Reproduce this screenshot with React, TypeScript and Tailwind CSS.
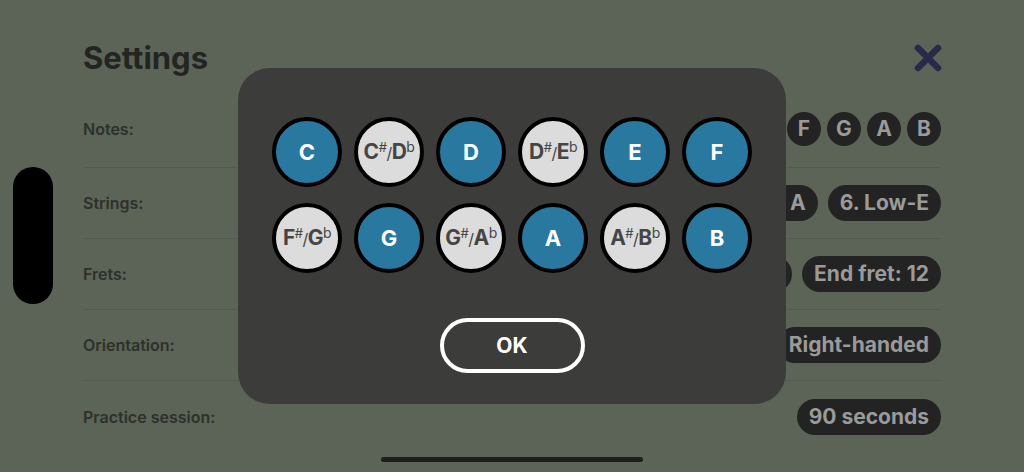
import React from "react";

const NOTES = [
  { name: "C", on: true },
  { name: "C#/Db", on: false },
  { name: "D", on: true },
  { name: "D#/Eb", on: false },
  { name: "E", on: true },
  { name: "F", on: true },
  { name: "F#/Gb", on: false },
  { name: "G", on: true },
  { name: "G#/Ab", on: false },
  { name: "A", on: true },
  { name: "A#/Bb", on: false },
  { name: "B", on: true },
];

const Chip = ({ children }: { children: React.ReactNode }) => (
  <div className="h-[36px] px-[12px] rounded-full bg-[#222322] text-[#9a9a9a] text-[21px] font-bold leading-[36px] whitespace-nowrap">
    {children}
  </div>
);

const NoteLabel = ({ name }: { name: string }) => {
  if (!name.includes("/")) return <span>{name}</span>;
  const [sharp, flat] = name.split("/");
  return (
    <span className="flex items-baseline tracking-[-0.5px]">
      {sharp[0]}
      <span className="text-[13px] font-normal relative -top-[7px]">#</span>
      <span className="text-[16px] font-normal">/</span>
      {flat[0]}
      <span className="text-[14px] font-normal relative -top-[7px]">b</span>
    </span>
  );
};

const Row = ({
  label,
  last,
  tall,
  children,
}: {
  label: string;
  last?: boolean;
  tall?: boolean;
  children: React.ReactNode;
}) => (
  <div
    className={`flex items-center justify-between ${tall ? "h-[78px]" : "h-[71px]"} ${
      last ? "" : "border-b border-[#545a50]"
    }`}
  >
    <span className="text-[16px] font-semibold text-[#2d312b]">{label}</span>
    <div className="flex items-center gap-[10px]">{children}</div>
  </div>
);

export default function App() {
  return (
    <div
      className="relative w-[1024px] h-[472px] overflow-hidden bg-[#5c6357]"
      style={{ fontFamily: "Inter, 'Liberation Sans', sans-serif" }}
    >
      <div className="px-[83px]">
        <div className="h-[90px] pt-[40px] flex justify-between">
          <h1 className="text-[31px] font-bold leading-[36px] text-[#232522]">Settings</h1>
          <svg width="30" height="30" viewBox="0 0 30 30" className="mt-[3px] mr-[-2px]">
            <path
              d="M5 5 L25 25 M25 5 L5 25"
              stroke="#29294a"
              strokeWidth="6.5"
              strokeLinecap="round"
            />
          </svg>
        </div>

        <Row label="Notes:" tall>
          <div className="flex gap-[6px]">
            {["C", "D", "E", "F", "G", "A", "B"].map((n) => (
              <div
                key={n}
                className="w-[34px] h-[34px] rounded-full bg-[#222322] text-[#9a9a9a] text-[21px] font-bold flex items-center justify-center"
              >
                {n}
              </div>
            ))}
          </div>
        </Row>
        <Row label="Strings:">
          <Chip>1. High-E</Chip>
          <Chip>2. B</Chip>
          <Chip>3. G</Chip>
          <Chip>4. D</Chip>
          <Chip>5. A</Chip>
          <Chip>6. Low-E</Chip>
        </Row>
        <Row label="Frets:">
          <Chip>Start fret: 1</Chip>
          <Chip>End fret: 12</Chip>
        </Row>
        <Row label="Orientation:">
          <Chip>Right-handed</Chip>
        </Row>
        <Row label="Practice session:" last>
          <Chip>90 seconds</Chip>
        </Row>
      </div>

      {/* floating side handle */}
      <div className="absolute left-[13px] top-[167px] w-[40px] h-[137px] rounded-full bg-black" />

      {/* note picker modal */}
      <div className="absolute left-[238px] top-[68px] w-[548px] h-[336px] rounded-[32px] bg-[#3c3d3b] pt-[49px] px-[34px]">
        <div className="grid grid-cols-6 gap-x-[12px] gap-y-[16px]">
          {NOTES.map((n) => (
            <div
              key={n.name}
              className={`w-[70px] h-[70px] rounded-full border-[4px] border-black flex items-center justify-center font-bold ${
                n.on
                  ? "bg-[#2878a0] text-white text-[22px]"
                  : "bg-[#dcdcdc] text-[#454545] text-[21px]"
              }`}
            >
              <NoteLabel name={n.name} />
            </div>
          ))}
        </div>
        <div className="flex justify-center mt-[45px]">
          <button className="w-[145px] h-[55px] rounded-full border-[4px] border-white text-white text-[21px] font-bold">
            OK
          </button>
        </div>
      </div>

      {/* home indicator */}
      <div className="absolute left-[381px] bottom-[10px] w-[262px] h-[5px] rounded-full bg-[#1e1f1d]" />
    </div>
  );
}
